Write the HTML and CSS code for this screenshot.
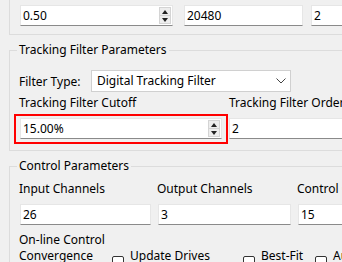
FILE: index.html
```html
<!DOCTYPE html>
<html>
<head>
<meta charset="utf-8">
<link rel="stylesheet" href="styles.css">
</head>
<body>
<div class="page">
  <div class="group group-top">
    <div class="row row-top">
      <div class="field w153">
        <span class="val">0.50</span>
        <span class="spin"><span class="up"></span><span class="down"></span></span>
      </div>
      <div class="field w119"><span class="val">20480</span></div>
      <div class="field w120"><span class="val">2</span></div>
    </div>
  </div>

  <div class="group group-track">
    <div class="legend">Tracking Filter Parameters</div>
    <div class="ftype">
      <span class="lbl">Filter Type:</span>
      <div class="select">
        <span class="val">Digital Tracking Filter</span>
        <svg class="chev" width="10" height="6" viewBox="0 0 10 6"><path d="M0.5 0.5 L5 5 L9.5 0.5" fill="none" stroke="#444" stroke-width="1"/></svg>
      </div>
    </div>
    <div class="cols2">
      <div class="col c1">
        <div class="lbl">Tracking Filter Cutoff</div>
        <div class="field hl">
          <span class="val">15.00%</span>
          <span class="spin"><span class="up"></span><span class="down"></span></span>
        </div>
      </div>
      <div class="col c2">
        <div class="lbl">Tracking Filter Order</div>
        <div class="field"><span class="val">2</span></div>
      </div>
    </div>
  </div>

  <div class="group group-ctrl">
    <div class="legend">Control Parameters</div>
    <div class="cols3">
      <div class="col c31">
        <div class="lbl">Input Channels</div>
        <div class="field"><span class="val">26</span></div>
      </div>
      <div class="col c32">
        <div class="lbl">Output Channels</div>
        <div class="field"><span class="val">3</span></div>
      </div>
      <div class="col c33">
        <div class="lbl">Control Channels</div>
        <div class="field"><span class="val">15</span></div>
      </div>
    </div>
    <div class="conv">
      <div class="convlbl">On-line Control<br>Convergence</div>
      <label class="chk c-a"><span class="box"></span>Update Drives</label>
      <label class="chk c-b"><span class="box"></span>Best-Fit</label>
      <label class="chk c-c"><span class="box"></span>Auto</label>
    </div>
  </div>
</div>
</body>
</html>
```
FILE: styles.css
```css
html, body {
  margin: 0;
  padding: 0;
  background: #f0f0f0;
}
body {
  width: 342px;
  height: 262px;
  overflow: hidden;
  font-family: "Noto Sans", "Open Sans", sans-serif;
  font-size: 12px;
  color: #000;
}
.page {
  width: 600px;
  padding-left: 9px;
}
.group {
  border: 1px solid #dcdcdc;
  border-right: none;
  position: relative;
}
.group-top {
  border-top: none;
  height: 34px;
}
.row-top {
  display: flex;
  padding-top: 5px;
  padding-left: 10px;
}
.row-top .field { margin-right: 8px; }
.row-top .w153 { width: 153px; margin-right: 11px; }
.w119 { width: 119px; }
.w120 { width: 120px; }

.field {
  box-sizing: border-box;
  height: 21px;
  background: #fff;
  border: 1px solid #e6e6e6;
  border-bottom: 1px solid #8a8a8a;
  display: flex;
  align-items: center;
  position: relative;
}
.val {
  padding-left: 2px;
  line-height: 16px;
  flex: 1;
  white-space: nowrap;
}
.spin {
  width: 12px;
  height: 17px;
  display: flex;
  flex-direction: column;
  margin-right: 1px;
  border: 1px solid #d4d4d4;
  box-sizing: border-box;
  background: #ededed;
}
.spin .up, .spin .down {
  flex: 1;
  position: relative;
}
.spin .up { border-bottom: 1px solid #d4d4d4; }
.spin .up::after, .spin .down::after {
  content: "";
  position: absolute;
  left: 2px;
  top: 2px;
  border-left: 3px solid transparent;
  border-right: 3px solid transparent;
}
.spin .up::after { border-bottom: 4px solid #222; }
.spin .down::after { border-top: 4px solid #222; top: 2px; }

.legend {
  position: absolute;
  top: -9px;
  left: 7px;
  padding: 0 2px;
  background: #f0f0f0;
  line-height: 16px;
}
.group-track {
  margin-top: 15px;
  height: 99px;
}
.ftype {
  display: flex;
  align-items: center;
  padding-top: 19px;
  padding-left: 9px;
}
.ftype .lbl { width: 72px; }
.select {
  box-sizing: border-box;
  width: 200px;
  height: 22px;
  background: #fff;
  border: 1px solid #d0d0d0;
  display: flex;
  align-items: center;
  padding-left: 3px;
  padding-right: 4px;
}
.chev { flex: none; }

.cols2 {
  display: flex;
  padding-left: 10px;
  padding-top: 3px;
  gap: 7px;
}
.col .lbl {
  line-height: 16px;
  height: 17px;
  white-space: nowrap;
}
.c1 .lbl { margin-left: -1px; }
.c1 { width: 202px; }
.c1 .field { margin-top: 6px; }
.c2 { width: 200px; }
.c2 .field { margin-top: 6px; }
.hl::before {
  content: "";
  position: absolute;
  left: -7px;
  right: -7px;
  top: -5px;
  bottom: -6px;
  border: 2px solid #ff0000;
  pointer-events: none;
}

.group-ctrl {
  margin-top: 15px;
  height: 200px;
}
.cols3 {
  display: flex;
  padding-left: 10px;
  padding-top: 14px;
  gap: 7px;
}
.c31 { width: 131px; }
.c32 { width: 133px; }
.c33 { width: 140px; }
.cols3 .field { margin-top: 6px; height: 21px; }
.cols3 .lbl { margin-left: -1px; }

.conv {
  display: flex;
  padding-left: 9px;
  padding-top: 7px;
  align-items: flex-start;
}
.convlbl {
  width: 93px;
  line-height: 16px;
}
.chk {
  display: flex;
  align-items: flex-start;
  padding-top: 16px;
  white-space: nowrap;
  line-height: 16px;
}
.box {
  flex: none;
  box-sizing: border-box;
  width: 12px;
  height: 12px;
  border: 1px solid #333;
  border-radius: 2px;
  margin-top: 8px;
  margin-right: 6px;
  background: #fff;
}
.c-a { width: 131px; }
.c-b { width: 72px; }
```
